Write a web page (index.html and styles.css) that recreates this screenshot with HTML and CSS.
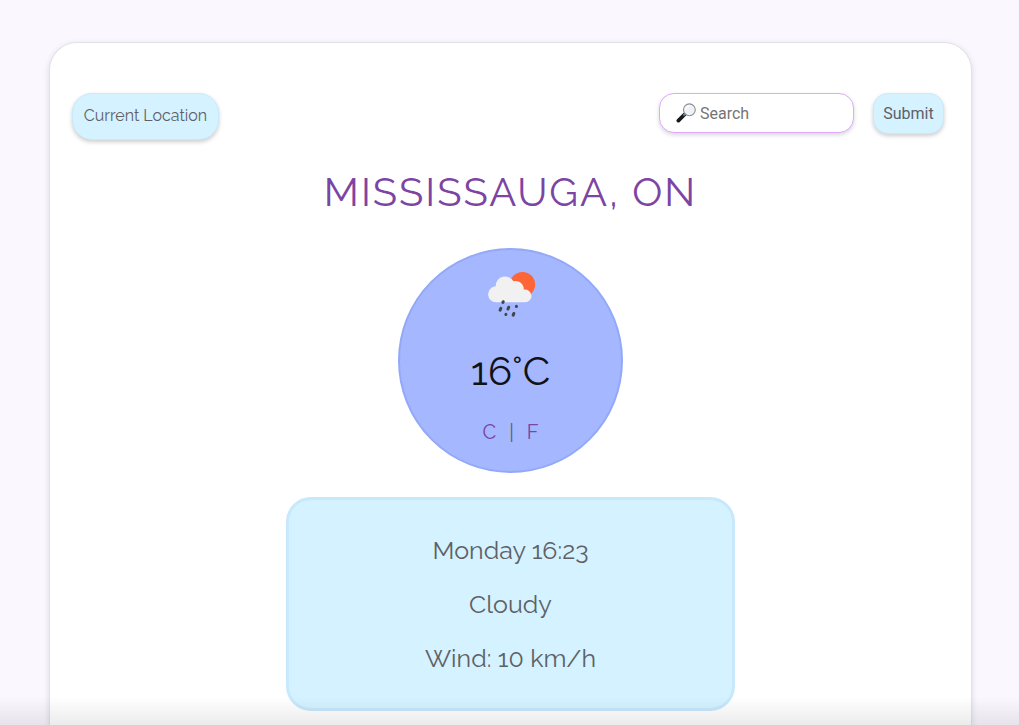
FILE: index.html
```html
<!DOCTYPE html>
<html lang="en">
<head>
<meta charset="utf-8">
<meta name="viewport" content="width=device-width, initial-scale=1">
<title>Weather</title>
<link rel="stylesheet" href="styles.css">
</head>
<body>
<main class="card">
  <header class="toolbar">
    <button class="button location" type="button">Current Location</button>
    <form class="search">
      <label class="field">
        <svg class="field-icon" viewBox="0 0 20 20" aria-hidden="true">
          <path d="M8.5 11.5 2.4 17.6" stroke="#161a1f" stroke-width="3.8" stroke-linecap="round"/>
          <path d="M9.3 10.7 7.4 12.6" stroke="#777d84" stroke-width="2"/>
          <circle cx="13.4" cy="6.8" r="5.9" fill="#eef2f6" stroke="#8b9097" stroke-width="1.1"/>
          <path d="M9.6 6.8a3.9 3.9 0 0 1 3.9-3.9" fill="none" stroke="#fff" stroke-width="1.4"/>
        </svg>
        <input class="input" type="text" placeholder="Search" aria-label="Search">
      </label>
      <button class="button submit" type="submit">Submit</button>
    </form>
  </header>
  <h1 class="city">Mississauga, ON</h1>
  <section class="current">
    <svg class="weather-icon" viewBox="0 0 50 50" role="img" aria-label="Rain with sun">
      <circle cx="36.5" cy="15.5" r="12.6" fill="#ff6536"/>
      <path d="M10.5 33.3a8 8 0 0 1-.8-16 9.5 9.5 0 0 1 17.8-5 8 8 0 0 1 10.2 8.3 6.7 6.7 0 0 1 7.8 6.3 6.4 6.4 0 0 1-6.2 6.4z" fill="#f1f1f2"/>
      <g stroke="#444549" stroke-width="3" stroke-linecap="round">
        <path d="m16.9 33.4.3-.7M14.1 41.2l.7-1.8M22 40l.7-1.8M19.9 45.2v.2M30.4 37.2v.2M27.2 46.1l.6-1.6"/>
      </g>
    </svg>
    <p class="temperature">16°C</p>
    <p class="units"><a class="unit" href="#celsius">C</a><span>|</span><a class="unit" href="#fahrenheit">F</a></p>
  </section>
  <section class="details">
    <p class="detail">Monday 16:23</p>
    <p class="detail">Cloudy</p>
    <p class="detail">Wind: 10 km/h</p>
  </section>
</main>
<div class="fade"></div>
</body>
</html>
```

FILE: styles.css
```css
* {
  box-sizing: border-box;
}

body {
  display: flex;
  flex-direction: column;
  min-height: 100vh;
  margin: 0;
  padding: 42px 47px 0 49px;
  background: #faf7ff;
  color: #5f6066;
  font-family: Raleway, Lato, sans-serif;
}

.card {
  display: flex;
  flex: 1;
  flex-direction: column;
  align-items: center;
  padding: 50px 22px 14px;
  background: #fff;
  border: 1px solid #e3e1e8;
  border-width: 1px 1px 0;
  border-radius: 28px 28px 0 0;
  box-shadow: 0 2px 6px rgba(0, 0, 0, 0.12);
}

.toolbar {
  display: flex;
  align-items: flex-start;
  justify-content: space-between;
  align-self: stretch;
  padding-right: 5px;
}

.button {
  padding: 0;
  background: #d4f2ff;
  border: 1px solid #c9eafb;
  box-shadow: 0 2px 4px rgba(0, 0, 0, 0.2);
  color: #5f6066;
}

.location {
  width: 147px;
  height: 47px;
  padding-bottom: 2px;
  border-radius: 20px;
  font: 16px Raleway, Lato, sans-serif;
}

.search {
  display: flex;
  gap: 19px;
}

.field {
  position: relative;
}

.field-icon {
  position: absolute;
  top: 10px;
  left: 17px;
  width: 20px;
  height: 20px;
}

.input {
  width: 195px;
  height: 40px;
  padding: 0 12px 0 40px;
  background: #fff;
  border: 1px solid #e0a8ff;
  border-radius: 15px;
  box-shadow: 0 2px 4px rgba(0, 0, 0, 0.16);
  font: 16px Roboto, sans-serif;
}

.input::placeholder {
  color: #757575;
  opacity: 1;
}

.submit {
  width: 71px;
  height: 41px;
  border-radius: 15px;
  font: 16px Roboto, sans-serif;
}

.city {
  margin: 28px 0 32px;
  color: #7c44a3;
  font-size: 40px;
  font-weight: 400;
  letter-spacing: 2px;
  line-height: 48px;
  text-transform: uppercase;
}

.current {
  display: flex;
  flex-direction: column;
  align-items: center;
  width: 225px;
  height: 225px;
  padding-top: 19px;
  background: #a4b7ff;
  border: 2px solid #93a9f8;
  border-radius: 50%;
}

.weather-icon {
  width: 50px;
  height: 50px;
}

.temperature {
  margin: 28px 0 25px;
  color: #111116;
  font-size: 40px;
  line-height: 48px;
}

.units {
  display: flex;
  gap: 13px;
  margin: 0;
  font-size: 20px;
  line-height: 24px;
}

.unit {
  color: #7c44a3;
  text-decoration: none;
}

.details {
  display: flex;
  flex-direction: column;
  gap: 22px;
  width: 449px;
  max-width: 100%;
  margin-top: 24px;
  padding: 34px 20px;
  background: #d4f2ff;
  border: 3px solid #c8e8fc;
  border-radius: 25px;
  text-align: center;
}

.detail {
  margin: 0;
  font-size: 25px;
  line-height: 32px;
}

.fade {
  position: fixed;
  right: 0;
  bottom: 0;
  left: 0;
  height: 28px;
  background: linear-gradient(transparent, rgba(0, 0, 0, 0.08));
  pointer-events: none;
}
```
